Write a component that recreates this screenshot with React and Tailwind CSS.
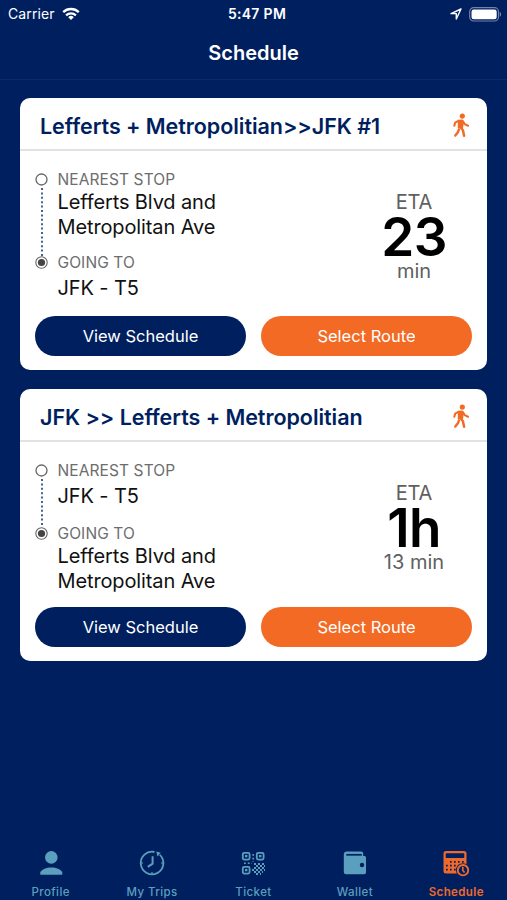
import React from 'react';
import clsx from 'clsx';

const routes = [
    {
        id: 1,
        title: 'Lefferts + Metropolitian>>JFK #1',
        from: ['Lefferts Blvd and', 'Metropolitan Ave'],
        to: ['JFK - T5'],
        eta: '23',
        unit: 'min',
    },
    {
        id: 2,
        title: 'JFK >> Lefferts + Metropolitian',
        from: ['JFK - T5'],
        to: ['Lefferts Blvd and', 'Metropolitan Ave'],
        eta: '1h',
        unit: '13 min',
    },
];

const WalkIcon = () => (
    <svg width="18" height="25" viewBox="0 0 18 25" fill="none" stroke="#f26a24" strokeLinecap="round" strokeLinejoin="round">
        <circle cx="10.3" cy="3.1" r="2.6" fill="#f26a24" stroke="none" />
        <path d="M6.6 7.6 10 7.2l1 1.8-.6 5.2-3.8.4Z" fill="#f26a24" strokeWidth="1.6" />
        <path d="M6.4 7.9 3.2 9.6 2.3 12.7" strokeWidth="2.1" />
        <path d="m10.8 8.2 1.9 2.9 3.3 1.6" strokeWidth="2.1" />
        <path d="m8.4 14 2.5 3.2 1.2 5.6" strokeWidth="2.5" />
        <path d="m6.9 16.6-1 2.6-2.6 3.3" strokeWidth="2.4" />
    </svg>
);

const StatusBar = () => (
    <div className="grid grid-cols-3 items-center h-7 px-2 text-[14px] leading-7">
        <div className="flex items-center gap-[7px]">
            <span className="tracking-[0.1px]">Carrier</span>
            <svg width="18" height="14" viewBox="0 0 18 14" fill="none" stroke="#fff" strokeWidth="2.3">
                <path d="M1.2 5.1a11.4 11.4 0 0 1 15.6 0" />
                <path d="M4.1 8.3a7.2 7.2 0 0 1 9.8 0" />
                <path d="M9 13 6.2 10.2a4 4 0 0 1 5.6 0Z" fill="#fff" stroke="none" />
            </svg>
        </div>
        <div className="text-center font-semibold tracking-[0.3px] pl-[7px]">5:47 PM</div>
        <div className="flex items-center justify-end gap-[7px] -mr-[3px]">
            <svg width="12" height="12" viewBox="0 0 12 12" fill="none" stroke="#fff" strokeWidth="1.4" strokeLinejoin="round">
                <path d="M11 1 1 5.6h5.3V11Z" />
            </svg>
            <svg width="33" height="15" viewBox="0 0 33 15">
                <rect x="0.7" y="0.7" width="28.8" height="13.3" rx="4" fill="none" stroke="#7382a8" strokeWidth="1.2" />
                <rect x="2.5" y="2.5" width="25.2" height="9.7" rx="2.2" fill="#fff" />
                <path d="M30.8 5c1.6.5 1.6 4.1 0 4.7Z" fill="#8793b5" />
            </svg>
        </div>
    </div>
);

const Stop = ({ label, lines }) => (
    <div>
        <div className="text-[15.5px] leading-[21px] tracking-[0.1px] text-[#6d6d6d]">{label}</div>
        <div className={clsx('text-[20px] tracking-[-0.12px] text-[#111]', lines.length > 1 ? 'leading-[24.5px]' : 'leading-[30px] -mb-px')}>
            {lines.map(line => (
                <div key={line}>{line}</div>
            ))}
        </div>
    </div>
);

const RouteCard = ({ route }) => (
    <div className="h-[272px] rounded-[10px] bg-white overflow-hidden">
        <div className="flex items-center justify-between h-[53px] pl-5 pr-[17px] border-b-2 border-[#e2e2e4]">
            <h2 className="text-[21.5px] tracking-[-0.05px] font-semibold text-[#001f5f] pt-[4px] whitespace-nowrap">{route.title}</h2>
            <div className="pt-[3px]">
                <WalkIcon />
            </div>
        </div>

        <div className="flex h-[165px] pl-[15px] pt-[18px]">
            {/* Stops */}
            <div className="flex gap-[9.5px]">
                <div className="flex flex-col items-center w-[13px] pt-1">
                    <svg width="13" height="13" viewBox="0 0 13 13">
                        <circle cx="6.5" cy="6.5" r="5.5" fill="none" stroke="#666" strokeWidth="1.3" />
                    </svg>
                    <svg width="2" height={route.from.length > 1 ? 70 : 50}>
                        <path d="M1 2v68" stroke="#16397a" strokeWidth="1.6" strokeDasharray="2 2.4" />
                    </svg>
                    <svg width="13" height="13" viewBox="0 0 13 13">
                        <circle cx="6.5" cy="6.5" r="5.7" fill="none" stroke="#666" strokeWidth="1.1" />
                        <circle cx="6.5" cy="6.5" r="3.6" fill="#444" />
                    </svg>
                </div>
                <div className="flex flex-col gap-[13px] w-[220px]">
                    <Stop label="NEAREST STOP" lines={route.from} />
                    <Stop label="GOING TO" lines={route.to} />
                </div>
            </div>

            {/* ETA */}
            <div className="flex flex-col items-center w-[146px] ml-auto pt-[21px] text-[20px] text-[#606060]">
                <div className="leading-6 tracking-[-0.2px]">ETA</div>
                <div className="text-[53px] leading-[46px] tracking-[-0.6px] font-semibold text-black">{route.eta}</div>
                <div className="leading-[23px]">{route.unit}</div>
            </div>
        </div>

        <div className="flex gap-[15px] px-[15px] text-[16.5px] text-white">
            <button className="flex-1 h-[40px] rounded-full bg-[#001f5f]">View Schedule</button>
            <button className="flex-1 h-[40px] rounded-full bg-[#f26a24]">Select Route</button>
        </div>
    </div>
);

const ProfileIcon = () => (
    <svg width="26" height="26" viewBox="0 0 26 26" fill="currentColor">
        <circle cx="13.3" cy="7.4" r="6.3" />
        <path d="M2.3 24.7v-2.2c1.6-3.4 6-5 11-5s9.4 1.6 11 5v2.2Z" />
    </svg>
);

const TripsIcon = () => (
    <svg width="26" height="26" viewBox="0 0 26 26" fill="none" stroke="currentColor" strokeWidth="1.8">
        <path d="M15.5 2A11.300 11.300 0 1 0 20.800 4.800" />
        <path d="M13.6 6.3v7.4l-4.8 3.1" strokeWidth="2" />
        <path d="m17.3 1.4 4.4 1.4-3.2 3.6Z" fill="currentColor" stroke="none" />
        <path d="M13 22v2M2 13h2M22 13h2" strokeWidth="1.2" />
    </svg>
);

const TicketIcon = () => (
    <svg width="26" height="26" viewBox="0 0 26 26" fill="none" stroke="currentColor" strokeWidth="1.8">
        <rect x="2.8" y="2.8" width="6.8" height="6.8" rx="1.5" />
        <rect x="16.8" y="2.8" width="6.8" height="6.8" rx="1.5" />
        <rect x="2.8" y="16.8" width="6.8" height="6.8" rx="1.5" />
        <path d="M5 6.2h2.4M19 6.2h2.4M5 20.2h2.4" strokeWidth="2.2" />
        <path d="M13.2 4v8M4 13.2h8" strokeDasharray="1.8 2" strokeWidth="1.6" />
        <path d="M14 14h10M14 18h10M14 22h9" strokeDasharray="2 2" strokeWidth="2" />
        <path d="M16 16h9M12 20h13M16 24h5" strokeDasharray="2 2" strokeWidth="2" />
    </svg>
);

const WalletIcon = () => (
    <svg width="26" height="26" viewBox="0 0 26 26">
        <path d="M1.8 4.5a3 3 0 0 1 3-2.9h14.4a2 2 0 0 1 2 2V6h1.2A1.5 1.5 0 0 1 24 7.5v15a1.7 1.7 0 0 1-1.7 1.7h-18a2.5 2.5 0 0 1-2.5-2.5Z" fill="currentColor" />
        <path d="M4.3 4.8h15.5" stroke="#001f5f" strokeWidth="1.7" />
        <circle cx="20" cy="15" r="2.2" fill="#001f5f" />
    </svg>
);

const ScheduleIcon = () => (
    <svg width="28" height="28" viewBox="0 0 28 28">
        <rect x="1.5" y="2" width="23" height="22.5" rx="2.5" fill="currentColor" />
        <rect x="3.7" y="4.2" width="18.6" height="4.8" rx="0.8" fill="#001f5f" />
        <path d="M8 12.8h14M4 16.7h14M4 20.6h10" stroke="#001f5f" strokeWidth="1.7" strokeDasharray="1.7 2.3" />
        <circle cx="21" cy="21.2" r="7" fill="#001f5f" />
        <circle cx="21" cy="21.2" r="5.2" fill="none" stroke="currentColor" strokeWidth="1.9" />
        <path d="M20.8 17.8v3.6l1.8 2.2" fill="none" stroke="currentColor" strokeWidth="1.6" />
    </svg>
);

const tabs = [
    { label: 'Profile', icon: ProfileIcon },
    { label: 'My Trips', icon: TripsIcon },
    { label: 'Ticket', icon: TicketIcon },
    { label: 'Wallet', icon: WalletIcon },
    { label: 'Schedule', icon: ScheduleIcon, active: true },
];

const App = () => {
    return (
        <div className="flex flex-col w-[507px] h-[900px] overflow-hidden bg-[#001f5f] font-['Inter',sans-serif] text-white">
            <StatusBar />
            <header className="h-[52px] border-b border-[#0b2a68] text-center text-[20px] leading-[50px] font-semibold">Schedule</header>

            <main className="flex flex-col gap-[19px] flex-1 pt-[18.4px] px-5">
                {routes.map(route => (
                    <RouteCard key={route.id} route={route} />
                ))}
            </main>

            <nav className="grid grid-cols-5 h-[51px]">
                {tabs.map(({ label, icon: Icon, active }) => (
                    <div key={label} className={clsx('flex flex-col items-center', active ? 'text-[#ee6a2c]' : 'text-[#5b9fbe]')}>
                        <div className="flex items-center justify-center h-7">
                            <Icon />
                        </div>
                        <span className={clsx('mt-[5.5px] text-[11.5px] leading-[18px] tracking-[0.4px]', active ? 'font-semibold' : 'font-medium')}>{label}</span>
                    </div>
                ))}
            </nav>
        </div>
    );
};

export default App;
